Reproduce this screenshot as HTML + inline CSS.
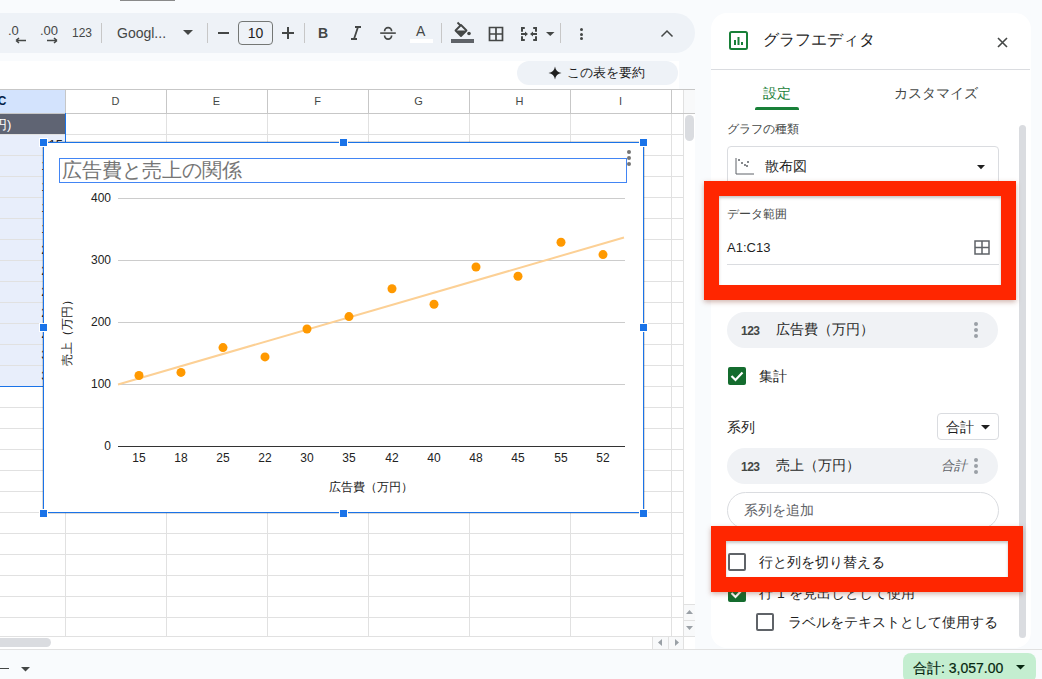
<!DOCTYPE html>
<html><head><meta charset="utf-8">
<style>
*{margin:0;padding:0;box-sizing:border-box}
html,body{width:1042px;height:679px;overflow:hidden;background:#f9fbfd;font-family:"Liberation Sans",sans-serif;color:#1f1f1f;position:relative}
.a{position:absolute}
.ti{position:absolute;color:#444746;font-size:13px;line-height:16px;white-space:nowrap}
.sep{position:absolute;width:1px;height:20px;background:#c7c7c7;top:23px}
.hl{position:absolute;height:1px;background:#e1e1e1}
.vl{position:absolute;width:1px;background:#e1e1e1}
.colh{position:absolute;top:89px;height:24px;font-size:11px;color:#444746;text-align:center;line-height:24px}
.lbl{position:absolute;font-size:13px;color:#444746;white-space:nowrap;line-height:16px}
.red{position:absolute;border:15px solid #ff2600;background:#fff;box-shadow:0 2px 5px rgba(120,40,20,.35),inset 0 2px 3px rgba(0,0,0,.22)}
.chip{position:absolute;left:727px;width:271px;height:36px;border-radius:18px;background:#f0f2f5}
.cb{position:absolute;width:18px;height:18px;border:2px solid #444746;border-radius:2px}
.cbg{position:absolute;width:18px;height:18px;background:#146c2e;border-radius:2px}
.h{position:absolute;width:9px;height:9px;background:#1a73e8;border:1px solid #fff}
.ax{position:absolute;font-size:12px;color:#222;line-height:14px;white-space:nowrap}
.cell{position:absolute;font-size:13px;color:#1f1f1f;line-height:16px;white-space:nowrap;text-align:right}
</style></head><body>

<div class="a" style="left:120px;top:0;width:55px;height:1px;background:#8a8a8a"></div>
<div class="a" style="left:-20px;top:13px;width:715px;height:40px;background:#eef2f7;border-radius:0 20px 20px 0"></div>
<div class="ti" style="left:8px;top:23px;font-size:13px">.0</div>
<div class="ti" style="left:40px;top:23px;font-size:13px">.00</div>
<svg class="a" style="left:15px;top:37px" width="12" height="7"><path d="M1 3.5H11M1 3.5L4 1M1 3.5L4 6" stroke="#444746" stroke-width="1.6" fill="none"/></svg>
<svg class="a" style="left:46px;top:37px" width="12" height="7"><path d="M1 3.5H11M11 3.5L8 1M11 3.5L8 6" stroke="#444746" stroke-width="1.6" fill="none"/></svg>
<div class="ti" style="left:72px;top:25px;font-size:12px">123</div>
<div class="sep" style="left:101px"></div>
<div class="ti" style="left:117px;top:25px;font-size:14px">Googl...</div>
<svg class="a" style="left:183px;top:30px" width="10" height="6"><path d="M0 0H10L5 5Z" fill="#444746"/></svg>
<div class="sep" style="left:207px"></div>
<div class="a" style="left:218px;top:32px;width:11px;height:1.6px;background:#444746"></div>
<div class="a" style="left:238px;top:21px;width:35px;height:24px;border:1px solid #747775;border-radius:4px;font-size:14px;text-align:center;line-height:22px;color:#1f1f1f">10</div>
<div class="a" style="left:282px;top:32px;width:12px;height:1.6px;background:#444746"></div>
<div class="a" style="left:287.2px;top:27px;width:1.6px;height:12px;background:#444746"></div>
<div class="sep" style="left:304px"></div>
<div class="ti" style="left:318px;top:25px;font-size:14px;font-weight:bold;color:#444746">B</div>
<svg class="a" style="left:348px;top:25px" width="14" height="16"><path d="M7 2H13M3 14H9M10 2L6 14" stroke="#444746" stroke-width="1.8" fill="none"/></svg>
<svg class="a" style="left:378px;top:24px" width="20" height="18"><path d="M6.6 7.2A3.5 3.5 0 0 1 13.6 7.2M6.6 11.6A3.5 3.5 0 0 0 13.6 11.6" stroke="#444746" stroke-width="1.7" fill="none"/><path d="M2.2 9.1H17.8" stroke="#444746" stroke-width="1.6"/></svg>
<div class="ti" style="left:416px;top:23px;font-size:14px">A</div>
<div class="a" style="left:410px;top:39px;width:23px;height:4px;background:#fff"></div>
<div class="sep" style="left:441px"></div>
<svg class="a" style="left:451px;top:21px" width="24" height="20"><path d="M4.5 9.5L10 4L15.5 9.5L10 15Z" stroke="#444746" stroke-width="1.8" fill="none" stroke-linejoin="round"/><path d="M6.5 1.5L9.5 4.5" stroke="#444746" stroke-width="1.8"/><path d="M5 9.5H15L10 14.5Z" fill="#444746"/><circle cx="18" cy="12.5" r="1.8" fill="#444746"/></svg>
<div class="a" style="left:451px;top:39px;width:23px;height:4px;background:#5f6368"></div>
<svg class="a" style="left:488px;top:26px" width="16" height="16"><path d="M1.5 1.5H14.5V14.5H1.5ZM8 1.5V14.5M1.5 8H14.5" stroke="#444746" stroke-width="1.7" fill="none"/></svg>
<svg class="a" style="left:521px;top:27px" width="16" height="14"><path d="M3.8 1H1V4.8M1 9.2V13H3.8M12.2 1H15V4.8M15 9.2V13H12.2M0 7H5M16 7H11" stroke="#444746" stroke-width="2" fill="none"/><path d="M4 4.4L7 7L4 9.6ZM12 4.4L9 7L12 9.6Z" fill="#444746"/></svg>
<svg class="a" style="left:546px;top:32px" width="9" height="5"><path d="M0 0H8.5L4.25 4Z" fill="#444746"/></svg>
<div class="sep" style="left:560px"></div>
<div class="a" style="left:579.5px;top:28px;width:3px;height:3px;border-radius:2px;background:#444746"></div>
<div class="a" style="left:579.5px;top:32.5px;width:3px;height:3px;border-radius:2px;background:#444746"></div>
<div class="a" style="left:579.5px;top:37px;width:3px;height:3px;border-radius:2px;background:#444746"></div>
<svg class="a" style="left:660px;top:29px" width="14" height="9"><path d="M1.5 7.5L7 2L12.5 7.5" stroke="#444746" stroke-width="1.5" fill="none"/></svg>

<div class="a" style="left:0;top:61px;width:679px;height:28px;background:#fff"></div>
<div class="a" style="left:0;top:89px;width:695px;height:560px;background:#fff"></div>
<div class="a" style="left:517px;top:61px;width:161px;height:24px;border-radius:12px;background:#eef2f7"></div>
<svg class="a" style="left:548px;top:66px" width="14" height="14"><path d="M7 0.5Q7.8 6.2 13.5 7Q7.8 7.8 7 13.5Q6.2 7.8 0.5 7Q6.2 6.2 7 0.5Z" fill="#1f1f1f"/></svg>
<div class="lbl" style="left:567px;top:65px;color:#1f1f1f;font-size:13px">この表を要約</div>
<div class="a" style="left:0;top:89px;width:695px;height:1px;background:#c7c7c7"></div>
<div class="a" style="left:0;top:90px;width:65px;height:23px;background:#d3e3fd"></div>
<div class="a" style="left:684px;top:90px;width:11px;height:23px;background:#f8f9fa"></div>
<div class="a" style="left:0;top:113px;width:695px;height:1px;background:#c7c7c7"></div>
<div class="vl" style="left:65px;top:90px;height:23px;background:#c7c7c7"></div>
<div class="vl" style="left:166px;top:90px;height:23px;background:#c7c7c7"></div>
<div class="vl" style="left:267px;top:90px;height:23px;background:#c7c7c7"></div>
<div class="vl" style="left:368px;top:90px;height:23px;background:#c7c7c7"></div>
<div class="vl" style="left:469px;top:90px;height:23px;background:#c7c7c7"></div>
<div class="vl" style="left:570px;top:90px;height:23px;background:#c7c7c7"></div>
<div class="vl" style="left:671px;top:90px;height:23px;background:#c7c7c7"></div>
<div class="vl" style="left:683px;top:90px;height:23px;background:#e1e1e1"></div>
<div class="colh" style="left:-8px;width:20px;font-weight:bold;color:#041e49;font-size:12px">C</div>
<div class="colh" style="left:65px;width:101px">D</div>
<div class="colh" style="left:166px;width:101px">E</div>
<div class="colh" style="left:267px;width:101px">F</div>
<div class="colh" style="left:368px;width:101px">G</div>
<div class="colh" style="left:469px;width:101px">H</div>
<div class="colh" style="left:570px;width:101px">I</div>
<div class="a" style="left:0;top:114px;width:65px;height:21px;background:#5f6473"></div>
<div class="a" style="left:-6px;top:116px;font-size:13px;color:#fff;white-space:nowrap">円)</div>
<div class="a" style="left:0;top:134px;width:65px;height:252px;background:#e8eefb"></div>
<div class="hl" style="left:0;top:134px;width:683px"></div>
<div class="hl" style="left:0;top:155px;width:683px"></div>
<div class="hl" style="left:0;top:176px;width:683px"></div>
<div class="hl" style="left:0;top:197px;width:683px"></div>
<div class="hl" style="left:0;top:218px;width:683px"></div>
<div class="hl" style="left:0;top:239px;width:683px"></div>
<div class="hl" style="left:0;top:260px;width:683px"></div>
<div class="hl" style="left:0;top:281px;width:683px"></div>
<div class="hl" style="left:0;top:302px;width:683px"></div>
<div class="hl" style="left:0;top:323px;width:683px"></div>
<div class="hl" style="left:0;top:344px;width:683px"></div>
<div class="hl" style="left:0;top:365px;width:683px"></div>
<div class="hl" style="left:0;top:386px;width:683px"></div>
<div class="hl" style="left:0;top:407px;width:683px"></div>
<div class="hl" style="left:0;top:428px;width:683px"></div>
<div class="hl" style="left:0;top:449px;width:683px"></div>
<div class="hl" style="left:0;top:470px;width:683px"></div>
<div class="hl" style="left:0;top:491px;width:683px"></div>
<div class="hl" style="left:0;top:512px;width:683px"></div>
<div class="hl" style="left:0;top:533px;width:683px"></div>
<div class="hl" style="left:0;top:554px;width:683px"></div>
<div class="hl" style="left:0;top:575px;width:683px"></div>
<div class="hl" style="left:0;top:596px;width:683px"></div>
<div class="hl" style="left:0;top:617px;width:683px"></div>
<div class="vl" style="left:65px;top:114px;height:522px"></div>
<div class="vl" style="left:166px;top:114px;height:522px"></div>
<div class="vl" style="left:267px;top:114px;height:522px"></div>
<div class="vl" style="left:368px;top:114px;height:522px"></div>
<div class="vl" style="left:469px;top:114px;height:522px"></div>
<div class="vl" style="left:570px;top:114px;height:522px"></div>
<div class="vl" style="left:671px;top:114px;height:522px"></div>
<div class="vl" style="left:683px;top:114px;height:522px"></div>
<div class="cell" style="left:0;width:63px;top:137px">115</div>
<div class="cell" style="left:0;width:63px;top:158px">120</div>
<div class="cell" style="left:0;width:63px;top:179px">160</div>
<div class="cell" style="left:0;width:63px;top:200px">145</div>
<div class="cell" style="left:0;width:63px;top:221px">190</div>
<div class="cell" style="left:0;width:63px;top:242px">210</div>
<div class="cell" style="left:0;width:63px;top:263px">255</div>
<div class="cell" style="left:0;width:63px;top:284px">230</div>
<div class="cell" style="left:0;width:63px;top:305px">290</div>
<div class="cell" style="left:0;width:63px;top:326px">275</div>
<div class="cell" style="left:0;width:63px;top:347px">330</div>
<div class="cell" style="left:0;width:63px;top:368px">310</div>
<div class="a" style="left:65px;top:113px;width:1px;height:274px;background:#1a73e8"></div>
<div class="a" style="left:0;top:386px;width:66px;height:1px;background:#1a73e8"></div>
<div class="a" style="left:685px;top:115px;width:9px;height:26px;border-radius:5px;background:#dadce0"></div>
<div class="a" style="left:684px;top:605px;width:11px;height:31px;background:#f8f9fa"></div>
<div class="a" style="left:683px;top:604px;width:12px;height:1px;background:#e1e1e1"></div>
<div class="a" style="left:683px;top:620px;width:12px;height:1px;background:#e1e1e1"></div>
<svg class="a" style="left:686px;top:610px" width="7" height="5"><path d="M0 4H7L3.5 0Z" fill="#9aa0a6"/></svg>
<svg class="a" style="left:686px;top:626px" width="7" height="5"><path d="M0 0H7L3.5 4Z" fill="#9aa0a6"/></svg>
<div class="a" style="left:0;top:636px;width:695px;height:13px;background:#fff"></div>
<div class="a" style="left:0;top:636px;width:695px;height:1px;background:#e1e1e1"></div>
<div class="a" style="left:-10px;top:638px;width:61px;height:9px;border-radius:5px;background:#dadce0"></div>
<div class="a" style="left:652px;top:637px;width:31px;height:12px;background:#f8f9fa;border-left:1px solid #e1e1e1"></div>
<div class="a" style="left:668px;top:637px;width:1px;height:12px;background:#e1e1e1"></div>
<div class="a" style="left:683px;top:637px;width:1px;height:12px;background:#e1e1e1"></div>
<svg class="a" style="left:658px;top:639px" width="5" height="7"><path d="M4 0V7L0 3.5Z" fill="#9aa0a6"/></svg>
<svg class="a" style="left:675px;top:639px" width="5" height="7"><path d="M0 0V7L4 3.5Z" fill="#9aa0a6"/></svg>
<div class="a" style="left:0;top:649px;width:1042px;height:1px;background:#e1e1e1"></div>
<div class="a" style="left:0;top:668px;width:9px;height:1.4px;background:#444746"></div>
<svg class="a" style="left:21px;top:667px" width="9" height="5"><path d="M0 0H9L4.5 4.5Z" fill="#444746"/></svg>
<div class="a" style="left:42.5px;top:141.5px;width:601px;height:371.5px;background:#fff;border:1.5px solid #1a73e8;box-shadow:0 0 0 0.6px rgba(0,0,0,.25)"></div>
<div class="a" style="left:59px;top:158px;width:568px;height:25px;border:1px solid #4285f4"></div>
<div class="a" style="left:62px;top:157px;font-size:20px;line-height:26px;color:#757575;white-space:nowrap">広告費と売上の関係</div>
<div class="a" style="left:627px;top:150px;width:3.5px;height:3.5px;border-radius:2px;background:#757575"></div>
<div class="a" style="left:627px;top:156px;width:3.5px;height:3.5px;border-radius:2px;background:#757575"></div>
<div class="a" style="left:627px;top:162px;width:3.5px;height:3.5px;border-radius:2px;background:#757575"></div>
<div class="a" style="left:118px;top:198px;width:507px;height:1px;background:#cccccc"></div>
<div class="ax" style="right:931px;top:191px">400</div>
<div class="a" style="left:118px;top:260px;width:507px;height:1px;background:#cccccc"></div>
<div class="ax" style="right:931px;top:253px">300</div>
<div class="a" style="left:118px;top:322px;width:507px;height:1px;background:#cccccc"></div>
<div class="ax" style="right:931px;top:315px">200</div>
<div class="a" style="left:118px;top:384px;width:507px;height:1px;background:#cccccc"></div>
<div class="ax" style="right:931px;top:377px">100</div>
<div class="ax" style="right:931px;top:439px">0</div>
<div class="a" style="left:118px;top:446px;width:507px;height:1px;background:#333"></div>
<svg class="a" style="left:0;top:0" width="1042" height="679">
<line x1="118" y1="384.5" x2="624" y2="237.5" stroke="#fcd095" stroke-width="2"/>
<circle cx="139" cy="375.5" r="4.5" fill="#ff9900"/>
<circle cx="181" cy="372.4" r="4.5" fill="#ff9900"/>
<circle cx="223" cy="347.6" r="4.5" fill="#ff9900"/>
<circle cx="265" cy="356.9" r="4.5" fill="#ff9900"/>
<circle cx="307" cy="329.0" r="4.5" fill="#ff9900"/>
<circle cx="349" cy="316.6" r="4.5" fill="#ff9900"/>
<circle cx="392" cy="288.7" r="4.5" fill="#ff9900"/>
<circle cx="434" cy="304.2" r="4.5" fill="#ff9900"/>
<circle cx="476" cy="267.0" r="4.5" fill="#ff9900"/>
<circle cx="518" cy="276.3" r="4.5" fill="#ff9900"/>
<circle cx="561" cy="242.2" r="4.5" fill="#ff9900"/>
<circle cx="603" cy="254.6" r="4.5" fill="#ff9900"/>
</svg>
<div class="ax" style="left:119px;width:40px;text-align:center;top:451px">15</div>
<div class="ax" style="left:161px;width:40px;text-align:center;top:451px">18</div>
<div class="ax" style="left:203px;width:40px;text-align:center;top:451px">25</div>
<div class="ax" style="left:245px;width:40px;text-align:center;top:451px">22</div>
<div class="ax" style="left:287px;width:40px;text-align:center;top:451px">30</div>
<div class="ax" style="left:329px;width:40px;text-align:center;top:451px">35</div>
<div class="ax" style="left:372px;width:40px;text-align:center;top:451px">42</div>
<div class="ax" style="left:414px;width:40px;text-align:center;top:451px">40</div>
<div class="ax" style="left:456px;width:40px;text-align:center;top:451px">48</div>
<div class="ax" style="left:498px;width:40px;text-align:center;top:451px">45</div>
<div class="ax" style="left:541px;width:40px;text-align:center;top:451px">55</div>
<div class="ax" style="left:583px;width:40px;text-align:center;top:451px">52</div>
<div class="ax" style="left:271px;width:200px;text-align:center;top:480px">広告費（万円）</div>
<div class="ax" style="left:-33px;width:200px;text-align:center;top:323px;transform:rotate(-90deg)">売上（万円）</div>
<div class="h" style="left:39px;top:138px"></div>
<div class="h" style="left:339px;top:138px"></div>
<div class="h" style="left:639px;top:138px"></div>
<div class="h" style="left:39px;top:323px"></div>
<div class="h" style="left:639px;top:323px"></div>
<div class="h" style="left:39px;top:509px"></div>
<div class="h" style="left:339px;top:509px"></div>
<div class="h" style="left:639px;top:509px"></div>
<div class="a" style="left:711px;top:13px;width:320px;height:635px;background:#fff;border-radius:16px"></div>
<svg class="a" style="left:729px;top:31px" width="20" height="20"><rect x="1" y="1" width="17" height="17" rx="1.5" stroke="#188038" stroke-width="2" fill="none"/><path d="M6 9V14M9.5 6V14M13 11V14" stroke="#188038" stroke-width="2"/></svg>
<div class="lbl" style="left:763px;top:30px;font-size:16px;line-height:20px;color:#1f1f1f">グラフエディタ</div>
<svg class="a" style="left:997px;top:37px" width="11" height="11"><path d="M1 1L10 10M10 1L1 10" stroke="#444746" stroke-width="1.6"/></svg>
<div class="a" style="left:711px;top:69px;width:319px;height:1px;background:#dadce0"></div>
<div class="lbl" style="left:763px;top:85px;font-size:14px;color:#188038">設定</div>
<div class="a" style="left:755px;top:107px;width:44px;height:3px;border-radius:2px 2px 0 0;background:#188038"></div>
<div class="lbl" style="left:894px;top:85px;font-size:14px;color:#444746">カスタマイズ</div>
<div class="a" style="left:1019px;top:125px;width:7px;height:513px;border-radius:4px;background:#dadce0"></div>
<div class="lbl" style="left:727px;top:121px;font-size:12px">グラフの種類</div>
<div class="a" style="left:727px;top:146px;width:272px;height:41px;border:1px solid #dadce0;border-radius:4px"></div>
<svg class="a" style="left:735px;top:157px" width="20" height="19"><path d="M1 1V17H19" stroke="#5f6368" stroke-width="1" fill="none"/><circle cx="4" cy="3" r="1" fill="#5f6368"/><circle cx="7" cy="6" r="1" fill="#5f6368"/><circle cx="10" cy="8" r="1" fill="#5f6368"/><circle cx="13" cy="5" r="1" fill="#5f6368"/><circle cx="12" cy="9" r="1" fill="#5f6368"/></svg>
<div class="lbl" style="left:765px;top:158px;font-size:14px;color:#1f1f1f">散布図</div>
<svg class="a" style="left:977px;top:165px" width="9" height="5"><path d="M0 0H8L4 4.3Z" fill="#1f1f1f"/></svg>
<div class="red" style="left:704px;top:181px;width:312px;height:119px"></div>
<div class="lbl" style="left:727px;top:206px;font-size:12px">データ範囲</div>
<div class="lbl" style="left:727px;top:240px;font-size:13px;color:#1f1f1f">A1:C13</div>
<svg class="a" style="left:974px;top:240px" width="16" height="15"><path d="M1 1H15V14H1ZM8 1V14M1 7.5H15" stroke="#5f6368" stroke-width="1.5" fill="none"/></svg>
<div class="a" style="left:727px;top:264px;width:272px;height:1px;background:#dadce0"></div>
<div class="chip" style="top:312px"></div>
<div class="lbl" style="left:741px;top:323px;font-size:12px;font-weight:bold;color:#444746;letter-spacing:-0.5px">123</div>
<div class="lbl" style="left:776px;top:321px;font-size:14px;color:#1f1f1f">広告費（万円）</div>
<div class="a" style="left:974px;top:322px;width:4px;height:4px;border-radius:2px;background:#9aa0a6"></div>
<div class="a" style="left:974px;top:328px;width:4px;height:4px;border-radius:2px;background:#9aa0a6"></div>
<div class="a" style="left:974px;top:334px;width:4px;height:4px;border-radius:2px;background:#9aa0a6"></div>
<div class="cbg" style="left:728px;top:367px"></div>
<svg class="a" style="left:728px;top:367px" width="18" height="18"><path d="M3.5 9L7.5 13L14.5 5.5" stroke="#fff" stroke-width="2.2" fill="none"/></svg>
<div class="lbl" style="left:759px;top:368px;font-size:14px;color:#1f1f1f">集計</div>
<div class="lbl" style="left:727px;top:419px;font-size:14px;color:#1f1f1f">系列</div>
<div class="a" style="left:937px;top:413px;width:62px;height:27px;border:1px solid #dadce0;border-radius:4px"></div>
<div class="lbl" style="left:946px;top:419px;font-size:14px;color:#1f1f1f">合計</div>
<svg class="a" style="left:981px;top:425px" width="9" height="5"><path d="M0 0H9L4.5 4.5Z" fill="#1f1f1f"/></svg>
<div class="chip" style="top:448px"></div>
<div class="lbl" style="left:741px;top:459px;font-size:12px;font-weight:bold;color:#444746;letter-spacing:-0.5px">123</div>
<div class="lbl" style="left:776px;top:457px;font-size:14px;color:#1f1f1f">売上（万円）</div>
<div class="lbl" style="left:941px;top:458px;font-size:13px;font-style:italic;color:#5f6368">合計</div>
<div class="a" style="left:974px;top:458px;width:4px;height:4px;border-radius:2px;background:#9aa0a6"></div>
<div class="a" style="left:974px;top:464px;width:4px;height:4px;border-radius:2px;background:#9aa0a6"></div>
<div class="a" style="left:974px;top:470px;width:4px;height:4px;border-radius:2px;background:#9aa0a6"></div>
<div class="a" style="left:727px;top:492px;width:272px;height:37px;border:1px solid #dadce0;border-radius:19px"></div>
<div class="lbl" style="left:744px;top:502px;font-size:14px;color:#5f6368">系列を追加</div>
<div class="cbg" style="left:728px;top:584px"></div>
<svg class="a" style="left:728px;top:584px" width="18" height="18"><path d="M3.5 9L7.5 13L14.5 5.5" stroke="#fff" stroke-width="2.2" fill="none"/></svg>
<div class="lbl" style="left:759px;top:585px;font-size:14px;color:#1f1f1f">行 1 を見出しとして使用</div>
<div class="red" style="left:711px;top:526px;width:312px;height:66px"></div>
<div class="cb" style="left:728px;top:553px;border-color:#5f6368"></div>
<div class="lbl" style="left:759px;top:554px;font-size:14px;color:#1f1f1f">行と列を切り替える</div>
<div class="cb" style="left:756px;top:613px;border-color:#5f6368"></div>
<div class="lbl" style="left:788px;top:614px;font-size:14px;color:#1f1f1f">ラベルをテキストとして使用する</div>
<div class="a" style="left:903px;top:653px;width:133px;height:30px;border-radius:8px;background:#c4eed0"></div>
<div class="lbl" style="left:913px;top:660px;font-size:14px;color:#072711;-webkit-text-stroke:0.2px #072711">合計: 3,057.00</div>
<svg class="a" style="left:1016px;top:665px" width="9" height="5"><path d="M0 0H9L4.5 4.5Z" fill="#072711"/></svg>
</body></html>
